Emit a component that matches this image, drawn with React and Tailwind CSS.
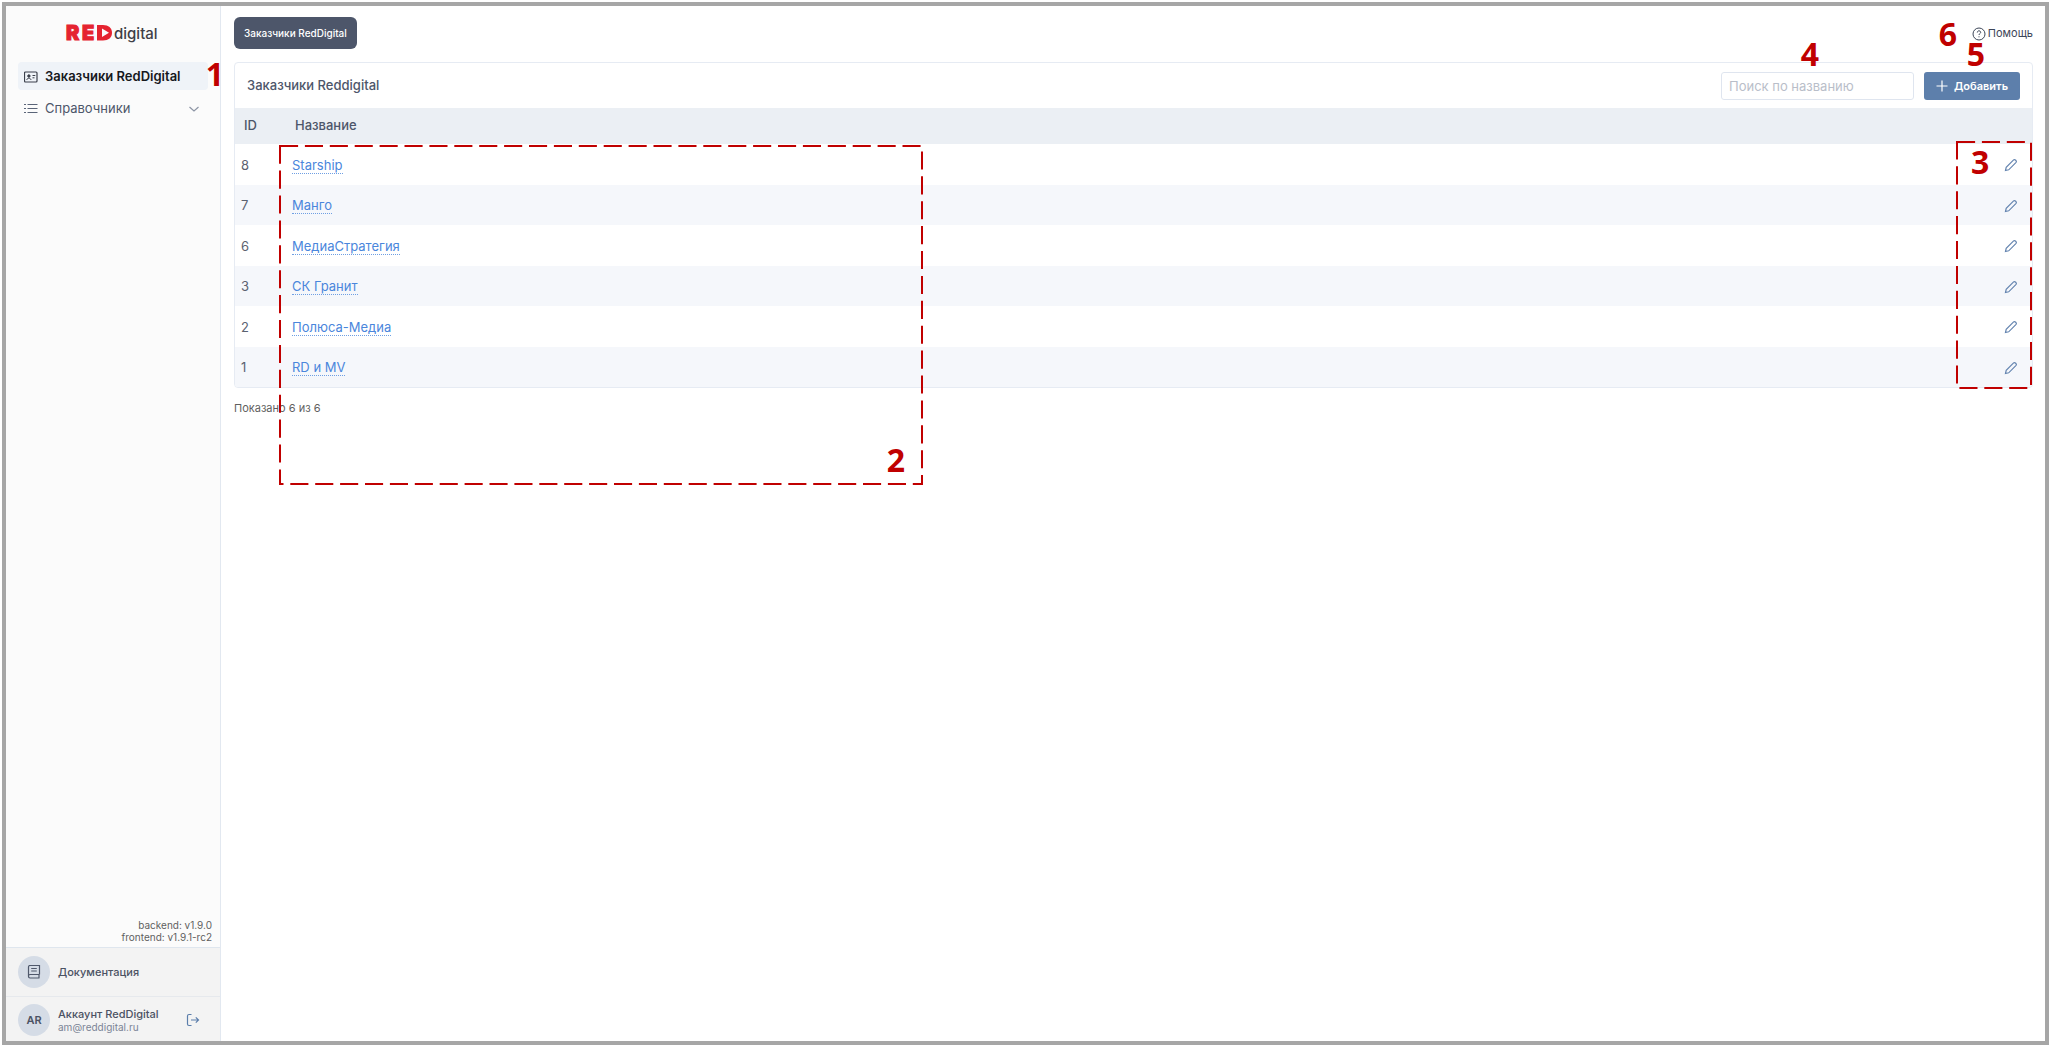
import { useState } from 'react';

const clients = [
    { id: 8, name: 'Starship' },
    { id: 7, name: 'Манго' },
    { id: 6, name: 'МедиаСтратегия' },
    { id: 3, name: 'СК Гранит' },
    { id: 2, name: 'Полюса-Медиа' },
    { id: 1, name: 'RD и MV' },
];

function Logo() {
    return (
        <svg className="h-6 w-[94px] overflow-visible" viewBox="0 0 94 24" role="img" aria-label="RED digital">
            <g fontFamily="Inter, sans-serif" fontWeight="900" fontSize="20" fill="#e52330" stroke="#e52330">
                <text x="0" y="18">R</text>
                <text x="16" y="18">E</text>
            </g>
            <path d="M31 3H37C42.500 3 46 6 46 10.800S42.500 18.500 37 18.500H31Z" fill="#e52330" />
            <path d="M36 6.500L43 10.800L36 15Z" fill="#fbfbfb" />
            <text x="48" y="17" fontFamily="Inter, sans-serif" fontWeight="500" fontSize="15" fill="#3f3f46">digital</text>
        </svg>
    );
}

function CardIcon() {
    return (
        <svg className="h-[14px] w-[14px] shrink-0" viewBox="0 0 14 14" fill="none" stroke="#3a3f4a">
            <rect x="0.500" y="2" width="12.500" height="10" rx="1" strokeWidth="1.200" />
            <path d="M2.800 10C3 7.600 6.700 7.600 7 10M8.500 5.500H11.300M8.500 7.800H10.500" />
            <circle cx="4.900" cy="6" r="1.200" fill="#3a3f4a" />
        </svg>
    );
}

function ListIcon() {
    return (
        <svg className="h-[14px] w-[14px] shrink-0" viewBox="0 0 14 14" stroke="#5a6478">
            <path d="M0 2.500H2M0 6.500H2M0 10.500H2M3.500 2.500H13.500M3.500 6.500H13.500M3.500 10.500H13.500" />
        </svg>
    );
}

function BookIcon() {
    return (
        <svg className="h-[14px] w-[14px]" viewBox="0 0 14 14" fill="none" stroke="#4f586b" strokeWidth="1.200">
            <path d="M12.500 9.500V0.500H3C2 0.500 1.500 1 1.500 2V11.500C1.500 12.500 2 13 3 13H12.500M12.500 9.500H3C1 9.500 1 13 3 13M12 9.500V13M4.200 3.500H9.800M4.200 6H9.800" />
        </svg>
    );
}

function LogoutIcon() {
    return (
        <svg className="h-[14px] w-[14px]" viewBox="0 0 14 14" fill="none" stroke="#5b7eab" strokeWidth="1.200">
            <path d="M5.500 1.500H3C2 1.500 1.500 2 1.500 3V11C1.500 12 2 12.500 3 12.500H5.500M5 7H12.500M9.800 4.300L12.500 7L9.800 9.700" />
        </svg>
    );
}

function PencilIcon() {
    return (
        <svg className="h-[14px] w-[14px]" viewBox="0 0 14 14" fill="none" stroke="#6585b0" strokeWidth="1.200">
            <path d="M1.500 12.500L2.200 9.300L9.600 1.900C10.800 0.800 13.200 3.200 12.100 4.400L4.700 11.800Z" />
        </svg>
    );
}

// Dashed highlight frame with its number
function Frame({ className, children }) {
    return (
        <div className={`pointer-events-none absolute ${className}`}>
            <svg className="block h-full w-full overflow-visible">
                <rect width="100%" height="100%" fill="none" stroke="#c00000" strokeWidth="2" strokeDasharray="18.1 6.8" />
            </svg>
            {children}
        </div>
    );
}

function Mark({ n, className }) {
    return (
        <span className={`pointer-events-none absolute font-['Open_Sans',sans-serif] text-[32px] leading-8 font-bold text-[#c00000] ${className}`}>{n}</span>
    );
}

function Sidebar() {
    return (
        <aside className="relative flex w-[215px] shrink-0 flex-col border-r border-[#e2e8f0] bg-[#fbfbfb]">
            <div className="flex justify-center pt-4 pb-4">
                <Logo />
            </div>
            <nav className="flex flex-col gap-[5px] px-3 text-[13px]">
                <a href="#clients" className="flex h-7 items-center gap-[7px] rounded bg-[#eff3f8] px-1.5 pt-px font-semibold text-[#16181d]">
                    <CardIcon />
                    Заказчики RedDigital
                </a>
                <button type="button" className="flex h-7 items-center gap-[7px] rounded px-1.5 text-[#4d566a]">
                    <ListIcon />
                    Справочники
                    <svg className="mr-0.5 ml-auto h-3 w-3" viewBox="0 0 12 12" fill="none" stroke="#8d95a5" strokeWidth="1.200">
                        <path d="M1.500 4L6 8L10.500 4" />
                    </svg>
                </button>
            </nav>
            <Mark n="1" className="top-[52px] -right-1" />

            <div className="mt-auto pr-2 pb-1 text-right text-[10px] leading-3 text-[#5f5f5f]">
                <p>backend: v1.9.0</p>
                <p>frontend: v1.9.1-rc2</p>
            </div>
            <div className="bg-[#f3f3f3] text-[11px] font-medium text-[#4b5263]">
                <a href="#docs" className="flex h-[49px] items-center gap-2 border-t border-[#dfe6ee] px-3">
                    <span className="flex h-8 w-8 items-center justify-center rounded-full bg-[#d5dce6]"><BookIcon /></span>
                    Документация
                </a>
                <div className="flex h-[45px] items-center gap-2 border-t border-[#e6e9ed] px-3 pt-0.5">
                    <span className="flex h-8 w-8 shrink-0 items-center justify-center rounded-full bg-[#d5dce6] font-semibold">AR</span>
                    <div>
                        <p className="leading-[14px]">Аккаунт RedDigital</p>
                        <p className="text-[10px] leading-3 font-normal text-[#7b8496]">am@reddigital.ru</p>
                    </div>
                    <button type="button" aria-label="Выйти" className="mr-2 ml-auto"><LogoutIcon /></button>
                </div>
            </div>
        </aside>
    );
}

export default function App() {
    const [search, setSearch] = useState('');
    const rows = clients.filter(c => c.name.toLowerCase().includes(search.toLowerCase()));

    return (
        <div className="min-h-screen bg-white p-0.5 pr-[3px] font-[Inter,sans-serif]">
            <div className="flex min-h-[calc(100vh-4px)] border-4 border-[#a6a6a6]">
                <Sidebar />
                <main className="relative min-w-0 flex-1 pt-[11px] pr-3 pl-[13px]">
                    <header className="flex h-8 items-center justify-between">
                        <button type="button" className="h-8 rounded-md bg-[#4d566a] px-2.5 text-[10px] font-medium text-white">Заказчики RedDigital</button>
                        <a href="#help" className="flex items-center gap-0.5 pt-px text-[11px] text-[#3d4658]">
                            <svg className="h-[14px] w-[14px]" viewBox="0 0 14 14" fill="none" stroke="#3d4658">
                                <circle cx="7" cy="7" r="6" />
                                <path d="M5.300 5.500C5.300 3.200 8.700 3.300 8.700 5.400C8.700 6.600 7 6.500 7 8M7 9.300V10.300" />
                            </svg>
                            Помощь
                        </a>
                    </header>

                    <section className="mt-[13px] overflow-hidden rounded border border-[#e6ebf3]">
                        <div className="flex h-[45px] items-center gap-2.5 px-3 pt-px">
                            <h1 className="text-[13px] font-medium text-[#4d566a]">Заказчики Reddigital</h1>
                            <input
                                className="ml-auto h-7 w-[193px] rounded-[3px] border border-[#dfe5ef] px-[7px] text-[13px] text-[#4d566a] outline-none placeholder:text-[#b9bec9]"
                                placeholder="Поиск по названию"
                                aria-label="Поиск по названию"
                                value={search}
                                onChange={e => setSearch(e.target.value)}
                            />
                            <button type="button" className="flex h-7 w-24 items-center justify-center gap-1.5 rounded-[3px] bg-[#5d7fab] text-[11px] font-semibold text-white">
                                <svg className="h-3 w-3" viewBox="0 0 12 12" stroke="#fff" strokeWidth="1.200">
                                    <path d="M6 0.500V11.500M0.500 6H11.500" />
                                </svg>
                                Добавить
                            </button>
                        </div>
                        <table className="w-full border-collapse text-left text-[13px] text-[#5b6270]">
                            <thead>
                                <tr className="h-9 bg-[#ebeff4] text-[#4d566a]">
                                    <th className="w-[51px] pl-[9px] font-medium">ID</th>
                                    <th className="pl-[9px] font-medium">Название</th>
                                    <th></th>
                                </tr>
                            </thead>
                            <tbody>
                                {rows.map(c => (
                                    <tr key={c.id} className="h-[41px] even:h-10 even:bg-[#f5f7fb]">
                                        <td className="pt-0.5 pl-1.5">{c.id}</td>
                                        <td className="pt-0.5 pl-1.5">
                                            <a href={`#${c.id}`} className="border-b border-dotted border-[#6f9fe3] text-[#4a86dc]">{c.name}</a>
                                        </td>
                                        <td className="w-20 pt-px pr-3.5">
                                            <button type="button" aria-label="Редактировать" className="ml-auto block"><PencilIcon /></button>
                                        </td>
                                    </tr>
                                ))}
                            </tbody>
                        </table>
                    </section>
                    <p className="mt-3 text-[11px] leading-4 text-[#5f5f5f]">Показано {rows.length} из {clients.length}</p>

                    <Frame className="top-[140px] left-[59px] h-[338px] w-[642px]">
                        <Mark n="2" className="right-[17px] bottom-2" />
                    </Frame>
                    <Frame className="top-[136px] right-3.5 h-[246px] w-[74px]">
                        <Mark n="3" className="top-1 left-3.5" />
                    </Frame>
                    <Mark n="4" className="top-8 right-[226px]" />
                    <Mark n="5" className="top-8 right-[60px]" />
                    <Mark n="6" className="top-3 right-[88px]" />
                </main>
            </div>
        </div>
    );
}
